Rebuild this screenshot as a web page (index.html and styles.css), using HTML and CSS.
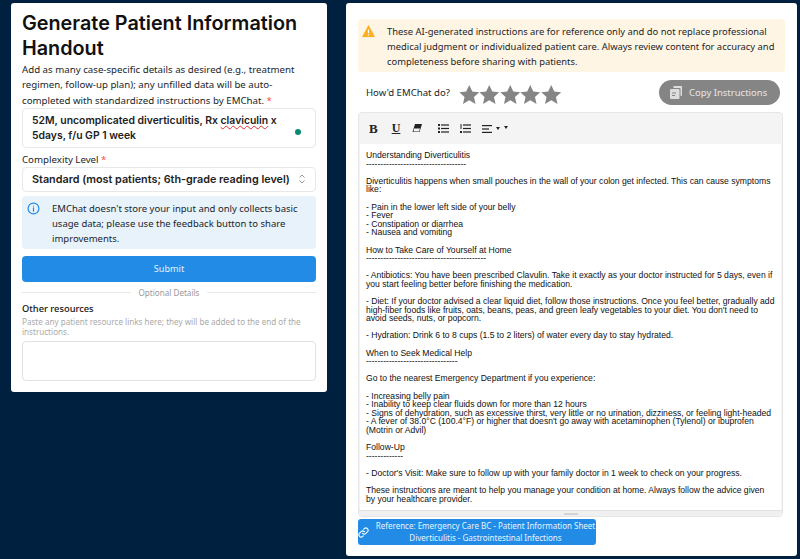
FILE: index.html
```html
<!DOCTYPE html>
<html lang="en">
<head>
  <meta charset="UTF-8">
  <meta name="viewport" content="width=device-width, initial-scale=1.0">
  <title>Generate Patient Information Handout</title>
  <link rel="stylesheet" href="styles.css">
</head>
<body>
  <div class="form-card">
    <h1>Generate Patient Information Handout</h1>
    <p class="intro">Add as many case-specific details as desired (e.g., treatment regimen, follow-up plan); any unfilled data will be auto-completed with standardized instructions by EMChat. <span class="req">*</span></p>
    <div class="case-box">
      <span>52M, uncomplicated diverticulitis, Rx <span class="typo">claviculin</span> x 5days, f/u GP 1 week</span>
      <i class="dot"></i>
    </div>
    <div class="label">Complexity Level <span class="req">*</span></div>
    <div class="select-box">
      <span>Standard (most patients; 6th-grade reading level)</span>
      <svg width="8" height="12" viewBox="0 0 8 12" fill="none" stroke="#999" stroke-width="1"><path d="M1.500 4.500 4 2 6.500 4.500M1.500 7.500 4 10 6.500 7.500"/></svg>
    </div>
    <div class="info-box">
      <svg width="13" height="13" viewBox="0 0 24 24" fill="none" stroke="#228be6" stroke-width="2.200" stroke-linecap="round"><circle cx="12" cy="12" r="10"/><path d="M12 11v6M12 7.500v.1"/></svg>
      <span>EMChat doesn't store your input and only collects basic usage data; please use the feedback button to share improvements.</span>
    </div>
    <button class="submit">Submit</button>
    <div class="divider"><span>Optional Details</span></div>
    <div class="res-label">Other resources</div>
    <p class="hint">Paste any patient resource links here; they will be added to the end of the instructions.</p>
    <div class="res-box"></div>
  </div>

  <div class="result-card">
    <div class="warn-box">
      <svg width="13" height="12" viewBox="0 0 24 22"><path d="M12 0 24 22H0Z" fill="#fcae1e"/><path d="M12 8v7M12 17.200v2" stroke="#fff" stroke-width="2.200"/></svg>
      <span>These AI-generated instructions are for reference only and do not replace professional medical judgment or individualized patient care. Always review content for accuracy and completeness before sharing with patients.</span>
    </div>
    <div class="rate-row">
      <div class="rate">
        <span class="rate-label">How'd EMChat do?</span>
        <div class="stars">
          <svg width="20.500" height="19" viewBox="0 0 24 23"><path d="M12 0l3.700 8 8.300 .8-6.300 5.600 1.900 8.600L12 18.500 4.400 23l1.900-8.600L0 8.800 8.300 8z" fill="#858585"/></svg>
          <svg width="20.500" height="19" viewBox="0 0 24 23"><path d="M12 0l3.700 8 8.300 .8-6.300 5.600 1.900 8.600L12 18.500 4.400 23l1.900-8.600L0 8.800 8.300 8z" fill="#858585"/></svg>
          <svg width="20.500" height="19" viewBox="0 0 24 23"><path d="M12 0l3.700 8 8.300 .8-6.300 5.600 1.900 8.600L12 18.500 4.400 23l1.900-8.600L0 8.800 8.300 8z" fill="#858585"/></svg>
          <svg width="20.500" height="19" viewBox="0 0 24 23"><path d="M12 0l3.700 8 8.300 .8-6.300 5.600 1.900 8.600L12 18.500 4.400 23l1.900-8.600L0 8.800 8.300 8z" fill="#858585"/></svg>
          <svg width="20.500" height="19" viewBox="0 0 24 23"><path d="M12 0l3.700 8 8.300 .8-6.300 5.600 1.900 8.600L12 18.500 4.400 23l1.900-8.600L0 8.800 8.300 8z" fill="#858585"/></svg>
        </div>
      </div>
      <button class="copy-btn">
        <svg width="12" height="13" viewBox="0 0 12 13"><path d="M3.500 0H11a1 1 0 0 1 1 1v8a1 1 0 0 1-1 1h-.5V3a1 1 0 0 0-1-1H3.500z" fill="#ddd"/><rect x="0" y="3" width="9.500" height="10" rx="1" fill="#ddd"/><path d="M2 7h4M2 9.500h3" stroke="#858585"/></svg>
        Copy Instructions
      </button>
    </div>
    <div class="editor">
      <div class="toolbar">
        <b class="tool-b">B</b>
        <u class="tool-u">U</u>
        <svg class="eraser" width="10" height="9" viewBox="0 0 10 9"><path d="M3 0h7L7.500 8H0.500z" fill="#222"/><path d="M2 4.500h6L7 7.500H1.500z" fill="#f4f4f4"/></svg>
        <svg class="list-ul" width="11" height="9" viewBox="0 0 11 9" fill="#222"><rect y="0" width="2" height="2"/><rect y="3.500" width="2" height="2"/><rect y="7" width="2" height="2"/><rect x="3" y=".4" width="8" height="1.200"/><rect x="3" y="3.900" width="8" height="1.200"/><rect x="3" y="7.400" width="8" height="1.200"/></svg>
        <svg class="list-ol" width="11" height="9" viewBox="0 0 11 9" fill="#222"><rect x=".5" y="0" width="1" height="3"/><rect y="3.500" width="2" height="1"/><rect y="7" width="2" height="2"/><rect x="3" y=".4" width="8" height="1.200"/><rect x="3" y="3.900" width="8" height="1.200"/><rect x="3" y="7.400" width="8" height="1.200"/></svg>
        <svg class="align" width="10" height="8" viewBox="0 0 10 8" fill="#222"><rect width="10" height="1.200"/><rect y="3.400" width="7" height="1.200"/><rect y="6.800" width="10" height="1.200"/></svg>
        <i class="caret"></i>
        <i class="caret up"></i>
      </div>
      <div class="doc">Understanding Diverticulitis
-----------------------------------

Diverticulitis happens when small pouches in the wall of your colon get infected. This can cause symptoms like:

- Pain in the lower left side of your belly
- Fever
- Constipation or diarrhea
- Nausea and vomiting

How to Take Care of Yourself at Home
------------------------------------------

- Antibiotics: You have been prescribed Clavulin. Take it exactly as your doctor instructed for 5 days, even if you start feeling better before finishing the medication.

- Diet: If your doctor advised a clear liquid diet, follow those instructions. Once you feel better, gradually add high-fiber foods like fruits, oats, beans, peas, and green leafy vegetables to your diet. You don't need to avoid seeds, nuts, or popcorn.

- Hydration: Drink 6 to 8 cups (1.5 to 2 liters) of water every day to stay hydrated.

When to Seek Medical Help
--------------------------------

Go to the nearest Emergency Department if you experience:

- Increasing belly pain
- Inability to keep clear fluids down for more than 12 hours
- Signs of dehydration, such as excessive thirst, very little or no urination, dizziness, or feeling light-headed
- A fever of 38.0°C (100.4°F) or higher that doesn't go away with acetaminophen (Tylenol) or ibuprofen (Motrin or Advil)

Follow-Up
-------------

- Doctor's Visit: Make sure to follow up with your family doctor in 1 week to check on your progress.

These instructions are meant to help you manage your condition at home. Always follow the advice given
by your healthcare provider.</div>
      <div class="resize-bar"><i></i></div>
    </div>
    <a class="ref-btn">
      <svg width="11" height="11" viewBox="0 0 24 24" fill="none" stroke="#fff" stroke-width="2.400" stroke-linecap="round"><path d="M10 14a5 5 0 0 0 7 0l4-4a5 5 0 0 0-7-7l-1.500 1.500"/><path d="M14 10a5 5 0 0 0-7 0l-4 4a5 5 0 0 0 7 7l1.500-1.500"/></svg>
      <span>Reference: Emergency Care BC - Patient Information Sheet<br>Diverticulitis - Gastrointestinal Infections</span>
    </a>
  </div>
</body>
</html>
```

FILE: styles.css
```css
* {
  margin: 0;
  padding: 0;
  box-sizing: border-box;
}

body {
  font-family: 'Noto Sans', sans-serif;
  background: #00203f;
  color: #212529;
  display: flex;
  align-items: flex-start;
  padding: 3px 3px 3px 11px;
  gap: 19px;
  height: 559px;
  overflow: hidden;
}

.form-card {
  width: 316px;
  height: 389px;
  flex-shrink: 0;
  background: #fff;
  border-radius: 3px;
  padding: 8px 11px;
}

.form-card h1 {
  font-family: 'Inter', sans-serif;
  font-size: 19.800px;
  font-weight: 600;
  line-height: 25px;
  color: #111;
}

.intro {
  font-size: 9.700px;
  line-height: 15.300px;
  margin-top: 1px;
}

.req {
  color: #fa5252;
}

.case-box {
  display: flex;
  justify-content: space-between;
  align-items: flex-end;
  height: 40px;
  padding: 4px 9px;
  border: 1px solid #e8e8e8;
  border-radius: 4px;
  font-family: 'Inter', sans-serif;
  font-size: 10.400px;
  font-weight: 600;
  line-height: 15px;
  color: #222;
}

.typo {
  text-decoration: underline wavy #e03131 1px;
}

.dot {
  width: 6px;
  height: 6px;
  margin: 0 5px 8px 8px;
  flex-shrink: 0;
  border-radius: 50%;
  background: #0b8a6f;
}

.label {
  font-size: 9.700px;
  line-height: 15px;
  margin-top: 4px;
}

.select-box {
  display: flex;
  justify-content: space-between;
  align-items: center;
  height: 25px;
  padding: 0 9px;
  border: 1px solid #e8e8e8;
  border-radius: 4px;
  font-family: 'Inter', sans-serif;
  font-size: 10.800px;
  font-weight: 600;
  color: #222;
}

.info-box {
  display: flex;
  gap: 12px;
  height: 53px;
  margin-top: 4px;
  padding: 5px;
  background: #e7f2fb;
  border-radius: 4px;
  font-size: 9.500px;
  line-height: 15px;
}

.info-box svg {
  flex-shrink: 0;
  margin-top: 1px;
}

.submit {
  display: block;
  width: 100%;
  height: 26px;
  margin-top: 7px;
  background: #228be6;
  border: none;
  border-radius: 4px;
  color: #e4f1fc;
  font-family: inherit;
  font-size: 9.100px;
}

.divider {
  display: flex;
  align-items: center;
  gap: 8px;
  margin-top: 5px;
  color: #999;
  font-size: 8.100px;
  line-height: 12px;
}

.divider::before,
.divider::after {
  content: "";
  flex: 1;
  height: 1px;
  background: #e8e8e8;
}

.res-label {
  font-size: 9.300px;
  font-weight: 500;
  line-height: 14px;
  margin-top: 3px;
  color: #111;
}

.hint {
  font-size: 8.100px;
  line-height: 10px;
  margin-top: 1px;
  color: #aaa;
}

.res-box {
  height: 40px;
  margin-top: 4px;
  border: 1px solid #e2e2e2;
  border-radius: 4px;
}

.result-card {
  width: 451px;
  height: 553px;
  flex-shrink: 0;
  background: #fff;
  border-radius: 3px;
  padding: 16px 12px;
}

.warn-box {
  display: flex;
  gap: 12px;
  height: 53px;
  padding: 5px 2px 5px 4px;
  background: #fff5e4;
  border-radius: 3px;
  font-size: 9.400px;
  line-height: 15px;
}

.warn-box svg {
  flex-shrink: 0;
  margin-top: 1px;
}

.rate-row {
  display: flex;
  justify-content: space-between;
  align-items: center;
  height: 25px;
  margin-top: 8px;
  padding: 0 5px 0 8px;
}

.rate {
  display: flex;
  align-items: center;
  gap: 9px;
}

.rate-label {
  font-size: 9.600px;
}

.stars {
  display: flex;
  margin-top: 3px;
}

.copy-btn {
  display: flex;
  align-items: center;
  gap: 7px;
  width: 121px;
  height: 25px;
  padding-left: 11px;
  background: #858585;
  border: none;
  border-radius: 13px;
  color: #e6e6e6;
  font-family: inherit;
  font-size: 9.500px;
}

.editor {
  margin: 7px 2px 0 0;
  background: #f4f4f4;
  border: 1px solid #e6e6e6;
  border-radius: 4px;
}

.toolbar {
  display: flex;
  align-items: center;
  height: 31px;
  padding-left: 10px;
  color: #222;
}

.tool-b {
  font-family: 'Liberation Serif', serif;
  font-size: 13px;
  margin-right: 14px;
}

.tool-u {
  font-family: 'Liberation Serif', serif;
  font-size: 12px;
  font-weight: bold;
  margin-right: 12px;
}

.eraser {
  margin-right: 16px;
}

.list-ul {
  margin-right: 11px;
}

.list-ol {
  margin-right: 11px;
}

.align {
  margin-right: 4px;
}

.caret {
  width: 0;
  height: 0;
  margin-right: 4px;
  border-left: 2.500px solid transparent;
  border-right: 2.500px solid transparent;
  border-top: 3px solid #222;
}

.caret.up {
  margin-top: -2px;
}

.doc {
  height: 366px;
  padding: 7px 5px 0 6px;
  margin: 0 1px;
  background: #fff;
  font-family: 'Liberation Sans', sans-serif;
  font-size: 8.600px;
  line-height: 8.600px;
  color: #111;
  white-space: pre-wrap;
}

.resize-bar {
  display: flex;
  justify-content: center;
  align-items: center;
  height: 6px;
  background: #f0f0f0;
  border-top: 1px solid #e2e2e2;
}

.resize-bar i {
  width: 14px;
  height: 2px;
  background: #d4d4d4;
}

.ref-btn {
  display: flex;
  align-items: center;
  width: 238px;
  height: 26px;
  margin-top: 2px;
  background: #228be6;
  border-radius: 3px;
  color: #e9f4fd;
  font-size: 8px;
  line-height: 12px;
  text-align: center;
}

.ref-btn svg {
  flex-shrink: 0;
  margin-right: 6px;
}

.ref-btn span {
  width: 221px;
  flex-shrink: 0;
  white-space: nowrap;
}
```
